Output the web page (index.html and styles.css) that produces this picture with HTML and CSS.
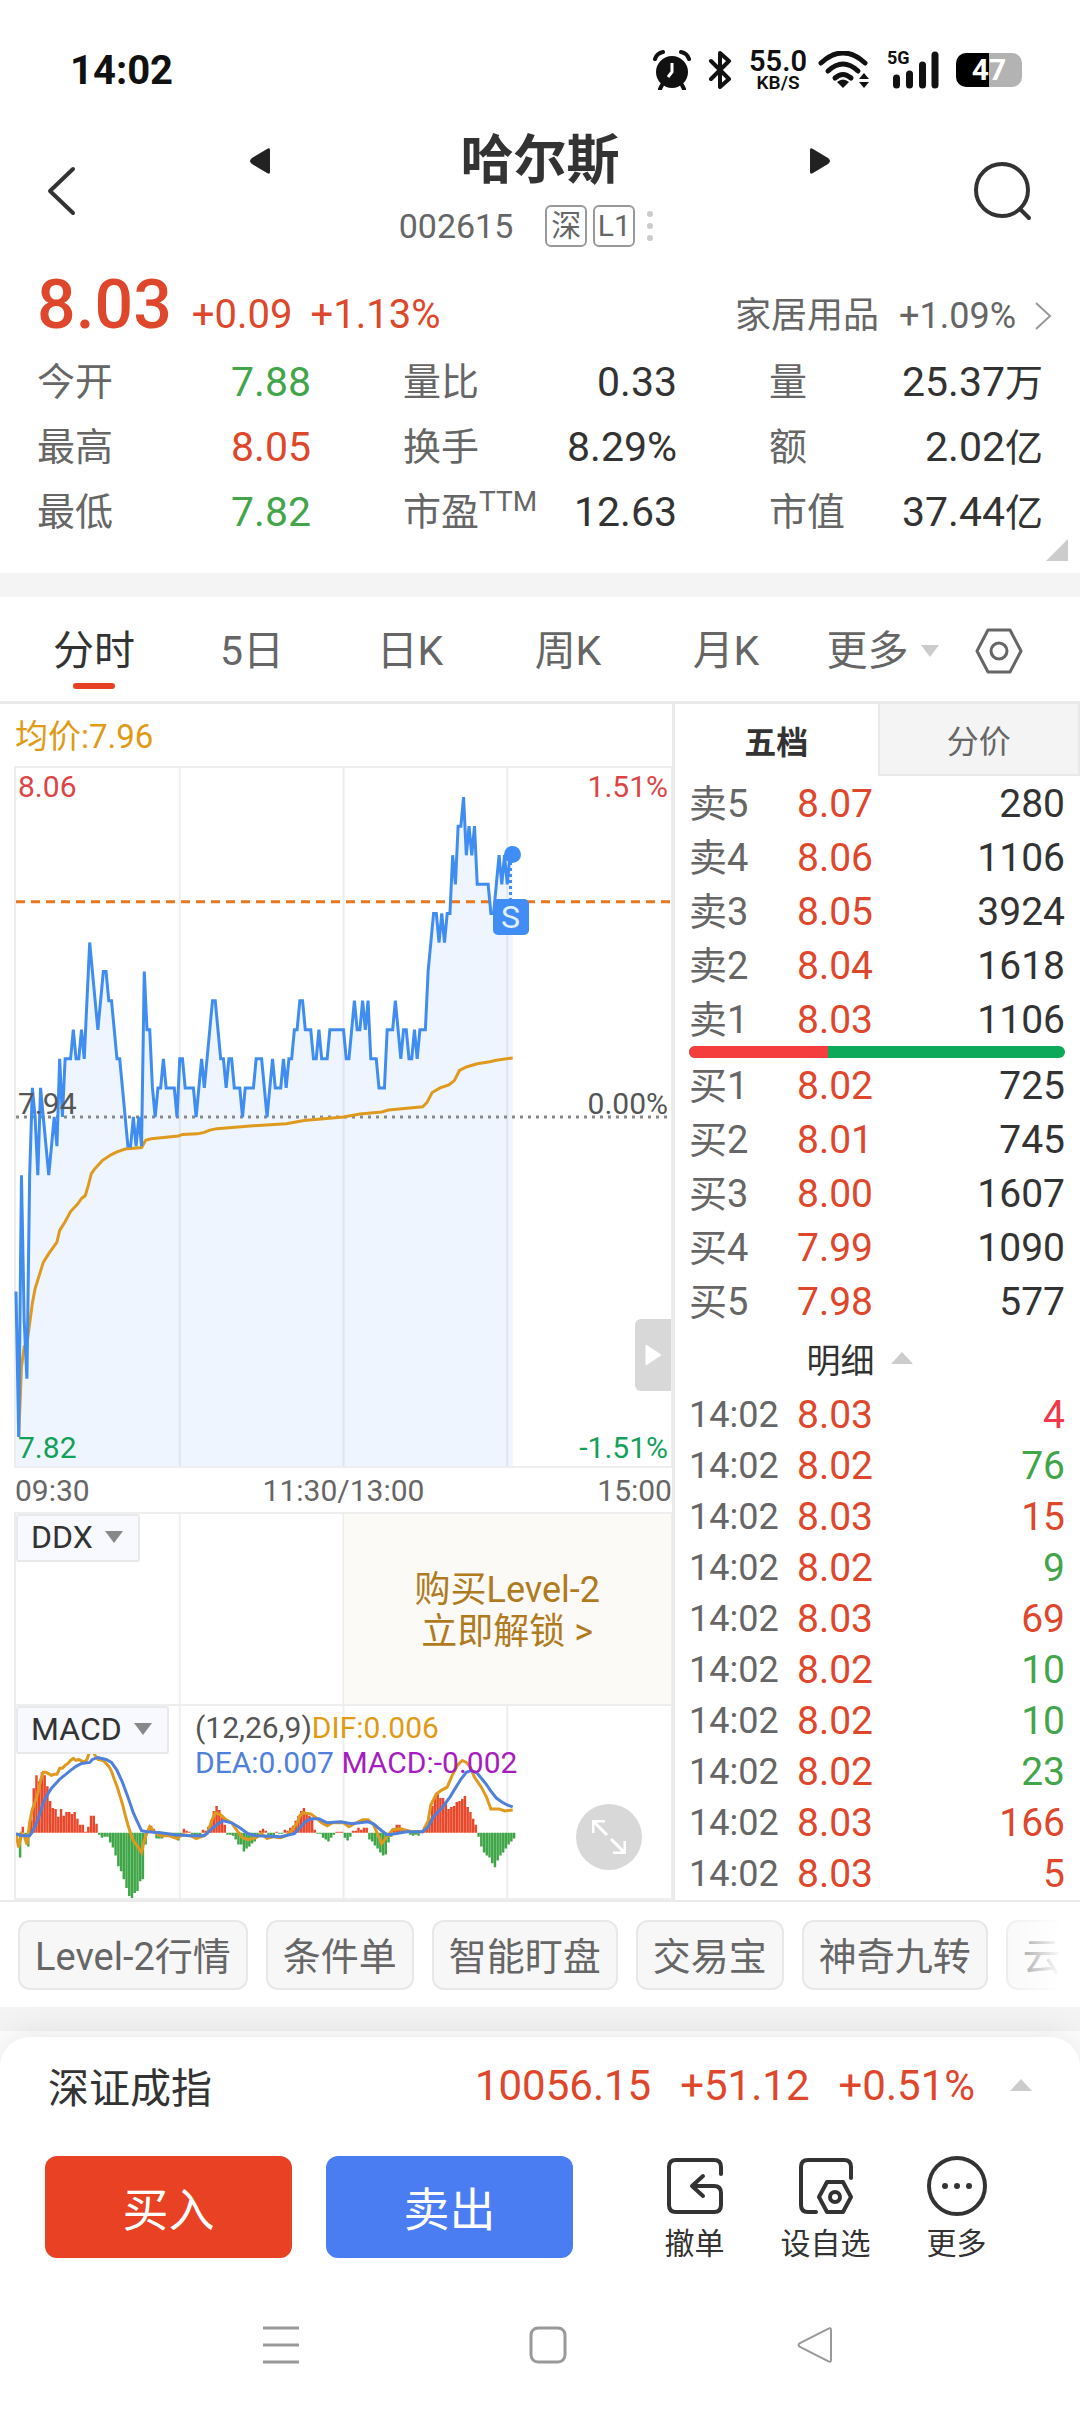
FILE: index.html
```html
<!DOCTYPE html>
<html lang="zh-CN">
<head>
<meta charset="utf-8">
<meta name="viewport" content="width=device-width">
<title>哈尔斯 002615</title>
<link rel="stylesheet" href="styles.css">
</head>
<body>
<div class="status">
  <time class="clock">14:02</time>
  <div class="status-icons">
    <svg width="38" height="40" viewBox="0 0 38 40"><circle cx="19" cy="22" r="16" fill="#111"/><path d="M19 13v9l-4 5" stroke="#fff" stroke-width="3" fill="none"/><path d="M2 9Q4 3 10 2M36 9Q34 3 28 2" stroke="#111" stroke-width="4" fill="none" stroke-linecap="round"/><path d="M9 35l-2 4M29 35l2 4" stroke="#111" stroke-width="4" stroke-linecap="round"/></svg>
    <svg width="24" height="38" viewBox="0 0 24 38"><path d="M3 10l18 18-9 8V2l9 8L3 28" fill="none" stroke="#111" stroke-width="4" stroke-linejoin="round" stroke-linecap="round"/></svg>
    <div class="speed"><b>55.0</b><small>KB/S</small></div>
    <svg width="52" height="38" viewBox="0 0 52 38"><g fill="none" stroke="#111" stroke-width="5" stroke-linecap="round"><path d="M3 12Q25-8 47 12"/><path d="M10 20Q25 6 40 20"/><path d="M17 27Q25 20 33 27"/></g><path d="M19 31q6-5 12 0l-6 6z" fill="#111"/><path d="M41 28l5-6 5 6zM41 31l5 6 5-6z" fill="#111"/></svg>
    <div class="signal"><small>5G</small><svg width="52" height="38" viewBox="0 0 52 38"><path d="M9.500 27v7M22.500 23v11M35.500 14v20M48 4v30" stroke="#111" stroke-width="7" stroke-linecap="round"/></svg></div>
    <div class="battery"><span>47</span></div>
  </div>
</div>

<header class="header">
  <button class="icon-btn" aria-label="返回"><svg width="40" height="56" viewBox="0 0 40 56"><path d="M33 6L10 28l23 22" fill="none" stroke="#333" stroke-width="4" stroke-linecap="round" stroke-linejoin="round"/></svg></button>
  <div class="title-block">
    <div class="title-row">
      <button class="step" aria-label="上一只"><svg width="24" height="28" viewBox="0 0 24 28"><path d="M22 3v22q0 3-3 1L4 17q-4-3 0-6L19 2q3-2 3 1z" fill="#222"/></svg></button>
      <h1>哈尔斯</h1>
      <button class="step" aria-label="下一只"><svg width="24" height="28" viewBox="0 0 24 28"><path d="M2 3v22q0 3 3 1l15-9q4-3 0-6L5 2Q2 0 2 3z" fill="#222"/></svg></button>
    </div>
    <div class="code-row"><span class="code">002615</span><span class="tag">深</span><span class="tag">L1</span><svg width="6" height="30" viewBox="0 0 6 30"><g fill="#ccc"><circle cx="3" cy="3" r="3"/><circle cx="3" cy="15" r="3"/><circle cx="3" cy="27" r="3"/></g></svg></div>
  </div>
  <button class="icon-btn" aria-label="搜索"><svg width="60" height="60" viewBox="0 0 60 60"><circle cx="30" cy="29" r="26" fill="none" stroke="#333" stroke-width="4"/><path d="M48 48l9 9" stroke="#333" stroke-width="4" stroke-linecap="round"/></svg></button>
</header>

<section class="quote">
  <div class="price-row">
    <span class="price">8.03</span><span class="chg">+0.09</span><span class="chg">+1.13%</span>
    <a class="industry" href="#">家居用品<span class="num">+1.09%</span><svg width="18" height="30" viewBox="0 0 18 30"><path d="M2 2l14 13L2 28" fill="none" stroke="#999" stroke-width="2"/></svg></a>
  </div>
  <dl class="stats">
    <div><dt>今开</dt><dd class="down">7.88</dd></div>
    <div><dt>量比</dt><dd>0.33</dd></div>
    <div><dt>量</dt><dd>25.37<span>万</span></dd></div>
    <div><dt>最高</dt><dd class="up">8.05</dd></div>
    <div><dt>换手</dt><dd>8.29%</dd></div>
    <div><dt>额</dt><dd>2.02<span>亿</span></dd></div>
    <div><dt>最低</dt><dd class="down">7.82</dd></div>
    <div><dt>市盈<sup>TTM</sup></dt><dd>12.63</dd></div>
    <div><dt>市值</dt><dd>37.44<span>亿</span></dd></div>
  </dl>
  <svg class="corner" width="22" height="22" viewBox="0 0 22 22"><path d="M22 0v22H0z" fill="#ccc"/></svg>
</section>

<nav class="tabs">
  <button class="on">分时</button><button>5日</button><button>日K</button><button>周K</button><button>月K</button>
  <button>更多<svg width="18" height="12" viewBox="0 0 18 12"><path d="M0 0h18l-9 12z" fill="#ccc"/></svg></button>
  <button aria-label="设置"><svg width="48" height="48" viewBox="0 0 48 48"><g fill="none" stroke="#666" stroke-width="3" stroke-linejoin="round"><path d="M13 3h22l11 21-11 21H13L2 24z"/><circle cx="24" cy="24" r="8"/></g></svg></button>
</nav>

<main class="board">
  <section class="charts">
    <p class="avg">均价:7.96</p>
    <div class="plot">
      <svg class="fill" viewBox="0 0 240 24" preserveAspectRatio="none">
        <path class="grid" d="M60 0V24M120 0V24M180 0V24"/>
        <path class="area" id="area"/>
        <path class="mid" d="M0 12H240"/>
        <path class="hold" d="M0 4.600H240"/>
        <path class="line-avg" id="avg"/>
        <path class="line-price" id="price"/>
      </svg>
      <span class="lab tl up2">8.06</span><span class="lab tr up2">1.51%</span>
      <span class="lab ml">7.94</span><span class="lab mr">0.00%</span>
      <span class="lab bl down2">7.82</span><span class="lab br down2">-1.51%</span>
      <div class="marker"><i></i><b>S</b></div>
      <button class="handle" aria-label="收起"><svg width="18" height="24" viewBox="0 0 18 24"><path d="M2 2v20L17 12z" fill="#fff" stroke="#fff" stroke-linejoin="round"/></svg></button>
    </div>
    <div class="axis"><span>09:30</span><span>11:30/13:00</span><span>15:00</span></div>
    <div class="panel">
      <svg class="fill" viewBox="0 0 240 194" preserveAspectRatio="none"><path class="grid" d="M60 0V194M120 0V194"/></svg>
      <button class="pick">DDX<svg width="18" height="12" viewBox="0 0 18 12"><path d="M0 0h18l-9 12z" fill="#888"/></svg></button>
      <a class="promo" href="#"><span>购买Level-2</span><span>立即解锁 &gt;</span></a>
    </div>
    <div class="panel last">
      <svg class="fill" viewBox="0 0 240 194" preserveAspectRatio="none">
        <path class="grid" d="M60 0V194M120 0V194M180 0V194"/>
        <path class="bars-up" id="bars-up"/><path class="bars-down" id="bars-down"/>
        <path class="line-avg" id="dif"/><path class="line-dea" id="dea"/>
      </svg>
      <button class="pick">MACD<svg width="18" height="12" viewBox="0 0 18 12"><path d="M0 0h18l-9 12z" fill="#888"/></svg></button>
      <p class="legend">(12,26,9)<span class="dif">DIF:0.006</span><br><span class="dea">DEA:0.007</span> <span class="macd">MACD:-0.002</span></p>
      <button class="expand" aria-label="全屏"><svg width="34" height="34" viewBox="0 0 34 34"><path d="M1 13V1h12M1 1l14 14M33 21v12H21M33 33L19 19" fill="none" stroke="#fff" stroke-width="3"/></svg></button>
    </div>
  </section>

  <section class="book">
    <div class="book-tabs"><button class="on">五档</button><button>分价</button></div>
    <table class="depth">
      <tr><th>卖5</th><td>8.07</td><td>280</td></tr>
      <tr><th>卖4</th><td>8.06</td><td>1106</td></tr>
      <tr><th>卖3</th><td>8.05</td><td>3924</td></tr>
      <tr><th>卖2</th><td>8.04</td><td>1618</td></tr>
      <tr><th>卖1</th><td>8.03</td><td>1106</td></tr>
    </table>
    <div class="ratio"><i style="width:37%"></i></div>
    <table class="depth">
      <tr><th>买1</th><td>8.02</td><td>725</td></tr>
      <tr><th>买2</th><td>8.01</td><td>745</td></tr>
      <tr><th>买3</th><td>8.00</td><td>1607</td></tr>
      <tr><th>买4</th><td>7.99</td><td>1090</td></tr>
      <tr><th>买5</th><td>7.98</td><td>577</td></tr>
    </table>
    <button class="detail">明细<svg width="22" height="12" viewBox="0 0 22 12"><path d="M0 12L11 0l11 12z" fill="#ccc"/></svg></button>
    <table class="depth ticks">
      <tr><th>14:02</th><td>8.03</td><td class="hot">4</td></tr>
      <tr><th>14:02</th><td>8.02</td><td class="down">76</td></tr>
      <tr><th>14:02</th><td>8.03</td><td class="up">15</td></tr>
      <tr><th>14:02</th><td>8.02</td><td class="down">9</td></tr>
      <tr><th>14:02</th><td>8.03</td><td class="up">69</td></tr>
      <tr><th>14:02</th><td>8.02</td><td class="down">10</td></tr>
      <tr><th>14:02</th><td>8.02</td><td class="down">10</td></tr>
      <tr><th>14:02</th><td>8.02</td><td class="down">23</td></tr>
      <tr><th>14:02</th><td>8.03</td><td class="up">166</td></tr>
      <tr><th>14:02</th><td>8.03</td><td class="up">5</td></tr>
    </table>
  </section>
</main>

<div class="chips">
  <button>Level-2行情</button><button>条件单</button><button>智能盯盘</button><button>交易宝</button><button>神奇九转</button><button class="next">云</button>
</div>
<div class="divider"></div>

<footer class="sheet">
  <div class="index"><span>深证成指</span><span class="num">10056.15</span><span class="num">+51.12</span><span class="num">+0.51%</span><svg width="22" height="12" viewBox="0 0 22 12"><path d="M0 12L11 0l11 12z" fill="#ccc"/></svg></div>
  <div class="actions">
    <button class="buy">买入</button><button class="sell">卖出</button>
    <div class="tools">
      <button><svg width="60" height="60" viewBox="0 0 60 60"><g fill="none" stroke="#333" stroke-width="4" stroke-linecap="round" stroke-linejoin="round"><path d="M56 18v-7q0-7-7-7H11q-7 0-7 7v38q0 7 7 7h38q7 0 7-7V37q0-7-7-7H28"/><path d="M38 20L27 30l11 10"/></g></svg>撤单</button>
      <button><svg width="60" height="60" viewBox="0 0 60 60"><g fill="none" stroke="#333" stroke-width="4" stroke-linecap="round" stroke-linejoin="round"><path d="M55 22V11q0-7-7-7H12q-7 0-7 7v38q0 7 7 7h8"/><path d="M31 26h16l8 15-8 15H31l-8-15z"/><circle cx="39" cy="41" r="5"/></g></svg>设自选</button>
      <button><svg width="60" height="60" viewBox="0 0 60 60"><circle cx="30" cy="30" r="28" fill="none" stroke="#333" stroke-width="4"/><g fill="#333"><circle cx="18" cy="30" r="3"/><circle cx="30" cy="30" r="3"/><circle cx="42" cy="30" r="3"/></g></svg>更多</button>
    </div>
  </div>
  <div class="sysnav">
    <button aria-label="菜单"><svg width="38" height="38" viewBox="0 0 38 38"><path d="M1 2h36M1 19h36M1 36h36" stroke="#999" stroke-width="3"/></svg></button>
    <button aria-label="主页"><svg width="38" height="38" viewBox="0 0 38 38"><rect x="2" y="2" width="34" height="34" rx="7" fill="none" stroke="#999" stroke-width="3"/></svg></button>
    <button aria-label="后退"><svg width="38" height="38" viewBox="0 0 38 38"><path d="M35 4v30q0 3-3 1L4 21q-3-2 0-4L32 3q3-2 3 1z" fill="none" stroke="#999" stroke-width="2"/></svg></button>
  </div>
</footer>
<script src="chart.js"></script>
</body>
</html>
```
FILE: styles.css
```css
* { box-sizing: border-box; }
body { margin: 0; background: #fff; color: #333; font-family: Roboto, "Noto Sans CJK SC", sans-serif; font-size: 36px; overflow-x: hidden; }
button { border: 0; padding: 0; margin: 0; background: none; font: inherit; color: inherit; }
a { color: inherit; text-decoration: none; }
p, h1, dl, dd { margin: 0; }
svg { display: block; flex: none; }
.up { color: #de472b; }
.down { color: #43a549; }

.status { display: flex; justify-content: space-between; align-items: center; height: 108px; padding: 32px 58px 0 70px; }
.clock { font-size: 40px; font-weight: 700; color: #111; }
.status-icons { display: flex; align-items: center; gap: 17px; color: #111; }
.speed { display: flex; flex-direction: column; align-items: center; font-weight: 700; }
.speed b { font-size: 29px; line-height: 26px; font-weight: 600; }
.speed small { font-size: 19px; line-height: 18px; font-weight: 600; }
.status-icons > :nth-child(4) { margin-left: -6px; }
.signal { position: relative; }
.signal small { position: absolute; left: 0; top: -2px; font-size: 18px; line-height: 18px; font-weight: 700; }
.battery { width: 66px; height: 34px; border-radius: 10px; background: linear-gradient(90deg, #000 50%, #b3b3b3 50%); color: #fff; display: grid; place-items: center; font-size: 30px; font-weight: 700; line-height: 34px; }

.header { display: flex; justify-content: space-between; align-items: center; height: 152px; padding: 14px 48px 0 40px; }
.title-block { display: flex; flex-direction: column; flex: 1; align-items: center; }
.title-row { display: flex; justify-content: space-between; width: 100%; padding: 0 140px 0 168px; align-items: center; }
.title-row h1 { font-size: 53px; line-height: 70px; font-weight: 700; }
.code-row { display: flex; align-items: center; height: 60px; gap: 6px; color: #666; }
.code { font-size: 34px; margin-right: 26px; }
.tag { border: 2px solid #999; border-radius: 6px; width: 42px; height: 42px; font-size: 30px; line-height: 38px; text-align: center; }
.code-row svg { margin-left: 6px; }

.quote { position: relative; height: 313px; padding: 0 37px; }
.price-row { display: flex; align-items: baseline; height: 90px; margin-right: -9px; line-height: 90px; color: #de472b; }
.price { font-size: 68px; font-weight: 500; margin-right: 20px; }
.chg { font-size: 40px; margin-right: 18px; }
.industry { display: flex; align-items: center; margin-left: auto; color: #666; }
.industry .num { font-size: 36px; margin: 0 18px 0 20px; }
.stats { display: grid; grid-template-columns: repeat(3, 1fr); column-gap: 92px; }
.stats > div { display: flex; justify-content: space-between; align-items: center; height: 65px; line-height: 65px; }
.stats dt { font-size: 38px; color: #666; white-space: nowrap; }
.stats dd { font-size: 41px; white-space: nowrap; }
.stats dd span { font-size: 38px; }
.stats sup { font-size: 28px; line-height: 28px; vertical-align: 14px; }
.corner { position: absolute; right: 12px; bottom: 12px; }

.tabs { display: grid; grid-template-columns: repeat(5, 158fr) 155fr 78fr; align-items: center; justify-items: center; border-top: 24px solid #f4f4f4; border-bottom: 3px solid #eaeaea; height: 131px; padding: 0 42px 0 15px; color: #666; }
.tabs button { position: relative; display: flex; align-items: center; gap: 12px; font-size: 41px; line-height: 60px; height: 100%; padding-top: 3px; }
.tabs .on { color: #333; }
.tabs .on::after { content: ""; position: absolute; left: 50%; margin-left: -21px; bottom: 12px; width: 42px; height: 6px; border-radius: 3px; background: #e64124; }

.board { display: grid; grid-template-columns: minmax(0, 672fr) minmax(0, 408fr); border-bottom: 2px solid #eaeaea; }
.charts { padding-left: 14px; }
.avg { height: 62px; padding-left: 1px; line-height: 66px; font-size: 33px; color: #e09a14; }
.plot, .panel { position: relative; border: 2px solid #eee; border-right-width: 1px; }
.plot { height: 702px; }
.fill { width: 100%; height: 100%; overflow: visible; }
.fill path { fill: none; vector-effect: non-scaling-stroke; }
.fill .grid { stroke: #eeeef0; stroke-width: 2px; }
.fill .area { fill: rgba(62, 141, 245, .09); }
.fill .mid { stroke: #888; stroke-width: 3px; stroke-dasharray: 3 5; }
.fill .hold { stroke: #e87722; stroke-width: 3px; stroke-dasharray: 9 6; }
.fill .line-avg { stroke: #df9a1d; stroke-width: 3px; }
.fill .line-price { stroke: #3f8df0; stroke-width: 3px; }
.fill .line-dea { stroke: #4f80dc; stroke-width: 3px; }
.fill .bars-up, .fill .bars-down { vector-effect: none; stroke-width: .9px; }
.fill .bars-up { stroke: #e8472a; }
.fill .bars-down { stroke: #3fa648; }
.lab { position: absolute; font-size: 30px; line-height: 36px; color: #555; }
.tl, .ml, .bl { left: 2px; }
.tr, .mr, .br { right: 3px; }
.tl, .tr { top: 1px; }
.ml, .mr { bottom: 50%; margin-bottom: -5px; }
.bl, .br { bottom: 0; }
.up2 { color: #dd4445; }
.down2 { color: #12a05a; }
.marker { position: absolute; left: 75.500%; top: 12.500%; width: 36px; height: 80px; margin-left: -18px; }
.marker i { position: absolute; left: 11px; top: -9px; width: 17px; height: 17px; border-radius: 50%; background: #3f8df5; }
.marker::before { content: ""; position: absolute; left: 16px; top: 0; height: 46px; border-left: 3px dotted #3f8df5; }
.marker b { position: absolute; left: 0; bottom: 0; width: 36px; height: 36px; border-radius: 5px; background: #3f8df5; color: #e4effd; font-size: 32px; line-height: 36px; font-weight: 400; text-align: center; }
.handle { position: absolute; right: 0; bottom: 75px; width: 36px; height: 72px; border-radius: 6px 0 0 6px; background: #d8d8d8; display: grid; place-items: center; }
.axis { display: flex; justify-content: space-between; height: 44px; padding-left: 1px; line-height: 46px; font-size: 30px; color: #666; }
.panel { height: 194px; }
.last { border-top: 0; overflow: hidden; }
.pick { position: absolute; left: 0; top: 0; display: flex; align-items: center; gap: 12px; height: 48px; padding: 0 15px 2px 13px; border: 2px solid #e9e9ec; border-radius: 3px; background: #f8f9fe; font-size: 32px; }
.promo { position: absolute; left: 50%; right: 0; top: 0; bottom: 0; padding-top: 4px; display: flex; flex-direction: column; align-items: center; justify-content: center; background: #fbfaf6; color: #b07b1f; font-size: 36px; line-height: 42px; }
.legend { position: absolute; left: 179px; top: 4px; font-size: 30px; line-height: 35px; color: #555; white-space: nowrap; }
.dif { color: #e09a14; }
.dea { color: #4f80dc; }
.macd { color: #a61cc0; }
.expand { position: absolute; right: 29px; bottom: 28px; width: 66px; height: 66px; border-radius: 50%; background: #d8d8d8; display: grid; place-items: center; }

.book { border-left: 3px solid #eaeaea; }
.book-tabs { display: grid; grid-template-columns: 1fr 1fr; height: 72px; }
.book-tabs button { font-size: 32px; background: #f4f4f4; color: #666; border: 2px solid #e9e9e9; border-top: 0; }
.book-tabs .on { background: #fff; color: #333; font-weight: 700; border: 0; }
.depth { width: 100%; border-collapse: collapse; table-layout: fixed; }
.depth tr { height: 54px; }
.depth th { width: 118px; padding: 2px 0 0 14px; text-align: left; font-weight: 400; font-size: 38px; line-height: 50px; color: #666; }
.depth td { padding: 2px 0 0; font-size: 39px; line-height: 50px; text-align: right; }
.depth td:nth-child(2) { width: 100px; padding-left: 4px; text-align: left; color: #de472b; }
.depth td:last-child { padding-right: 15px; }
.ratio { height: 12px; margin: 0 15px 0 14px; border-radius: 6px; background: #0ca95a; overflow: hidden; }
.ratio i { display: block; height: 12px; background: #f63d3d; }
.detail { display: flex; align-items: center; justify-content: center; gap: 16px; width: 100%; height: 60px; padding-right: 36px; font-size: 34px; }
.ticks tr { height: 51px; }
.ticks th, .ticks td { line-height: 48px; padding-top: 3px; }
.ticks th { font-size: 36px; }
.ticks .hot { color: #f0384a; }

.chips { position: relative; display: flex; gap: 18px; padding: 18px 0 17px 18px; margin-right: 18px; overflow: hidden; }
.chips button { flex: none; height: 70px; padding: 0 15px 4px; border: 2px solid #e8e8e8; border-radius: 12px; background: #f7f7f7; color: #666; font-size: 38px; }
.chips .next { flex: 1; text-align: left; border-right: 0; border-radius: 12px 0 0 12px; padding-right: 0; }
.chips::after { content: ""; position: absolute; right: 0; top: 0; bottom: 0; width: 76px; background: linear-gradient(90deg, rgba(255, 255, 255, 0), #fff); }
.divider { height: 24px; background: #f4f4f4; margin-bottom: 6px; }

.sheet { position: relative; border-radius: 30px 30px 0 0; background: #fff; box-shadow: 0 0 36px rgba(0, 0, 0, .12); }
.index { display: flex; align-items: center; height: 96px; padding: 0 48px; font-size: 41px; gap: 29px; }
.index span:first-child { margin-right: auto; }
.index .num { font-size: 42px; color: #de472b; }
.index svg { margin-left: 6px; }
.actions { display: grid; grid-template-columns: 247fr 247fr 415fr; column-gap: 34px; padding: 23px 58px 0 45px; }
.buy, .sell { height: 102px; padding-bottom: 2px; border-radius: 12px; background: #e84124; color: #fff; font-size: 46px; }
.sell { background: #4b7df2; }
.tools { display: grid; grid-template-columns: 1fr 1fr 1fr; padding-left: 22px; }
.tools button { display: flex; flex-direction: column; align-items: center; gap: 8px; font-size: 30px; line-height: 40px; }
.sysnav { display: grid; grid-template-columns: repeat(3, 267fr); justify-items: center; padding: 62px 132px 46px 148px; }
```
FILE: chart.js
```js
// Intraday prices: [minute, ticks below the upper limit]
const price = [0,18,1,23,2,14,3,19,4,21,5,14,6,11,7,12,8,14,9,11,10,12,11,13,12,14,13,13,14,12,15,13,16,10,17,12,18,10,20,10,21,9,22,10,23,10,24,9,25,10,26,8,27,6,28,7,30,9,32,7,33,7,34,8,35,8,36,9,37,10,38,10,39,11,41,13,42,13,43,12,44,13,45,12,46,13,47,7,48,9,49,9,50,11,51,12,52,11,53,11,54,10,55,11,58,11,59,12,60,10,61,10,62,11,65,11,66,12,68,10,69,11,70,10,72,8,73,8,74,9,75,10,76,10,77,11,78,10,79,10,80,11,82,11,83,12,84,11,87,11,88,10,90,10,92,12,94,10,95,11,97,11,98,10,99,11,100,10,101,10,102,9,103,9,104,8,105,8,106,9,108,9,109,10,110,10,111,9,112,10,114,10,115,9,120,9,121,10,122,10,124,8,125,9,126,9,127,8,128,9,129,8,130,10,132,10,133,11,135,11,136,9,138,9,139,8,141,10,142,9,143,9,144,10,145,10,146,9,147,10,148,9,150,9,151,7,153,5,154,5,155,6,156,5,157,6,158,5,159,5,160,3,161,4,162,2,163,2,164,1,165,3,166,2,167,3,168,2,169,4,173,4,174,5,175,5,177,3,178,4,179,3,180,4,181,3,182,3];
const avg = [1,23,2,20.6,3,19.9,4,19.8,5,19.1,6,18.4,7,17.9,9,17.3,10,17,12,16.7,15,16.3,16,15.9,18,15.6,20,15.25,22.5,15,24,14.8,25.4,14.7,26.5,14.35,27.6,13.95,28.7,13.8,31.6,13.5,34.8,13.3,37,13.2,40,13.1,46,13.05,47.5,12.8,49.5,12.75,59.5,12.65,61,12.6,66.5,12.58,69,12.53,71,12.45,73.6,12.4,87,12.3,99,12.23,105.5,12.12,120,12,126,11.9,134,11.83,136.5,11.76,149,11.65,150.6,11.5,151.7,11.3,152.5,11.16,155.4,11,158.6,10.9,160.6,10.75,162.5,10.4,165,10.28,169,10.17,173.6,10.1,176,10.05,182,9.97];
// MACD histogram, one value per minute
const bars = [0,-25,6,-2,-14,13,45,58,52,61,58,47,32,25,24,16,24,17,21,21,19,21,14,8,8,1,6,17,17,9,-2,-5,-4,-4,-10,-15,-23,-34,-39,-47,-56,-64,-67,-61,-59,-49,-47,-12,2,7,4,-6,-6,-6,-2,-2,-3,-4,-6,-8,-3,4,2,1,-2,-5,-6,-4,3,2,6,13,22,27,23,15,8,-2,-2,-3,-7,-12,-12,-19,-16,-14,-11,-9,-3,2,4,2,-3,-6,-4,1,-1,-1,3,2,5,7,12,17,22,25,21,17,13,3,-1,-1,-5,-7,-9,-5,-2,1,1,1,-5,-8,-4,2,2,5,3,5,5,-7,-9,-13,-16,-20,-23,-22,-10,-4,2,8,8,4,3,2,-2,-3,-2,-3,2,3,7,15,27,36,40,35,35,31,24,26,27,31,32,34,37,26,21,14,8,-4,-14,-20,-23,-25,-31,-35,-28,-23,-20,-16,-12,-9,-6];
const dif = [0,129,1,143,2,129,3,131,4,140,5,118,6,104,7,97,8,88,9,75,10,67,11,67,13,70,14,69,15,69,16,63,17,63,18,60,19,58,20,55,21,53,22,55,23,54,25,57,26,54,27,46,28,45,29,50,30,54,32,55,34,61,35,66,36,74,37,81,38,90,39,99,40,110,41,120,42,129,43,136,45,144,46,148,47,136,48,128,49,122,51,128,53,131,56,131,58,133,59,134,61,130,64,131,66,134,68,132,70,129,72,114,73,108,75,110,77,115,79,118,81,126,83,133,85,135,88,133,90,129,92,134,94,132,97,133,99,131,101,126,103,118,104,111,105,108,108,109,110,113,112,118,114,121,116,118,120,118,122,122,124,119,127,115,129,115,131,120,134,139,136,132,138,125,141,124,145,127,149,127,151,116,152,100,154,89,156,85,158,82,160,69,162,59,163.5,55,165,57,166.5,62,168,72,170.5,82,172.4,92,174,104,177,104,179,106,182,105];
const dea = [0,129,2,131,5,131,6,127,8,115,10,98,11,92,13,83,16,74,20,65,22,61,24,58,27,57,28,54,30,52,33,54,35,57,37,65,39,77,41,92,43,108,45,120,46,126,48,127,53,128,58,130,64,131,69,131,71,126,74,119,76,116,79,118,82,123,85,129,88,131,97,132,102,129,104,123,106,117,108,114,111,114,114,118,119,117,123,119,129,117,131,119,134,126,136,130,139,129,143,127,149,127,151,122,153,112,156,103,159,92,161,83,163,74,165,67,167,65,169,68,172,78,174,86,176,93,178,97,180,100,182,102];

const set = (id, d) => document.getElementById(id).setAttribute("d", d);
const columns = sign => bars.map((v, m) => v * sign > 0 ? `M${m + 0.5} 128v${-v}` : "").join("");

set("price", "M" + price.join(" "));
set("area", "M0 24L" + price.join(" ") + "V24Z");
set("avg", "M" + avg.join(" "));
set("dif", "M" + dif.join(" "));
set("dea", "M" + dea.join(" "));
set("bars-up", columns(1));
set("bars-down", columns(-1));
```
